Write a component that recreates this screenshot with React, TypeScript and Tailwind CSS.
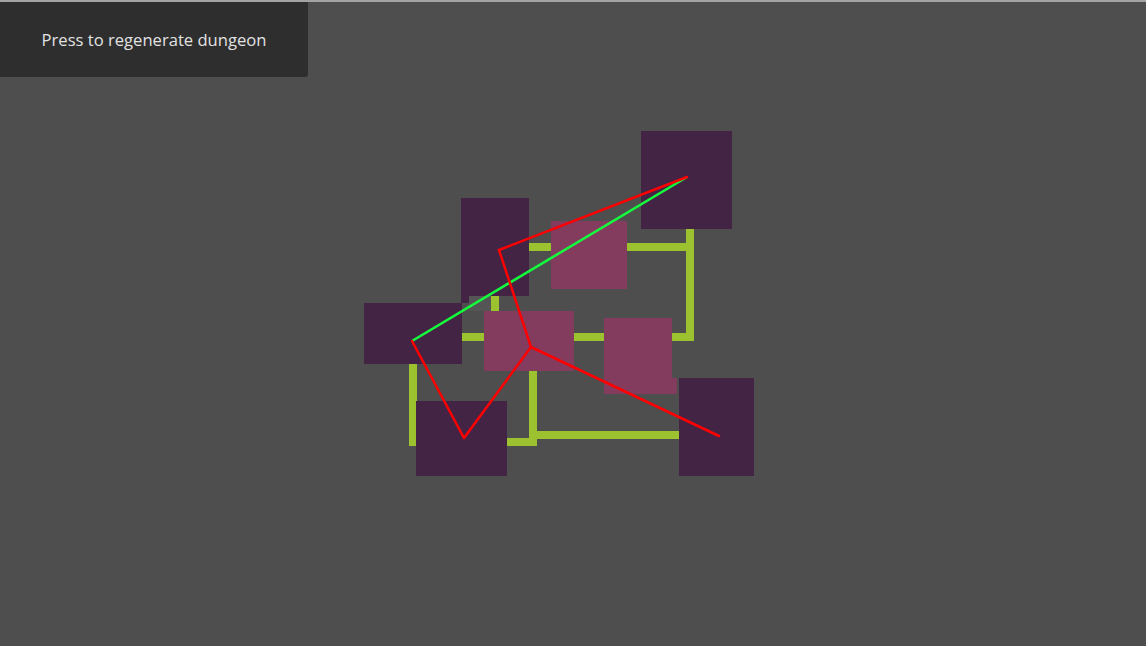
import React from 'react';

type Box = { x: number; y: number; w: number; h: number };

const box = (x1: number, y1: number, x2: number, y2: number): Box => ({ x: x1, y: y1, w: x2 - x1, h: y2 - y1 });

// corridors sit under the rooms
const CORRIDORS: Box[] = [
  box(529, 243, 551, 251),
  box(627, 243, 694, 251),
  box(686, 228, 694, 341),
  box(672, 333, 694, 341),
  box(574, 333, 604, 341),
  box(491, 296, 499, 311),
  box(462, 333, 484, 341),
  box(409, 364, 417, 446),
  box(529, 371, 537, 446),
  box(507, 438, 537, 446),
  box(537, 431, 679, 439),
];

const ROOMS: Box[] = [
  box(641, 131, 732, 229),
  box(461, 198, 529, 296),
  box(461, 296, 469, 303),
  box(364, 303, 462, 364),
  box(416, 401, 507, 476),
  box(679, 378, 754, 476),
];

const HALLS: Box[] = [
  box(551, 221, 627, 289),
  box(484, 311, 574, 371),
  box(604, 318, 672, 394),
  box(672, 378, 677, 394),
];

const RED: [number, number, number, number][] = [
  [412, 341, 464, 438],
  [464, 438, 531, 347],
  [531, 347, 499, 250],
  [499, 250, 687, 177],
  [531, 347, 719, 436],
];

const DungeonMap: React.FC = () => (
  <svg className="absolute inset-0 block" width={1146} height={644} viewBox="0 2 1146 644">
    <rect x={469} y={296} width={30} height={15} fill="#555555" shapeRendering="crispEdges" />
    {CORRIDORS.map((c, i) => (
      <rect key={'c' + i} x={c.x} y={c.y} width={c.w} height={c.h} fill="#9dc22f" shapeRendering="crispEdges" />
    ))}
    {ROOMS.map((r, i) => (
      <rect key={'r' + i} x={r.x} y={r.y} width={r.w} height={r.h} fill="#432445" shapeRendering="crispEdges" />
    ))}
    {HALLS.map((r, i) => (
      <rect key={'h' + i} x={r.x} y={r.y} width={r.w} height={r.h} fill="#833b5e" shapeRendering="crispEdges" />
    ))}
    <line x1={412} y1={341} x2={687} y2={177} stroke="#14ff3c" strokeWidth={2.5} />
    {RED.map(([x1, y1, x2, y2], i) => (
      <line key={'l' + i} x1={x1} y1={y1} x2={x2} y2={y2} stroke="#ff0000" strokeWidth={2.5} strokeLinecap="round" />
    ))}
  </svg>
);

export default function App() {
  return (
    <div className="relative w-[1146px] h-[646px] overflow-hidden bg-[#4e4e4e] border-t-2 border-[#a3a3a3] font-['Open_Sans','Noto_Sans',sans-serif]">
      <DungeonMap />
      <button className="relative z-10 w-[308px] h-[75px] bg-[#2e2e2e] rounded-br-[3px] text-[16.6px] font-medium text-[#e2e2e2] flex items-center justify-center pt-[2px]">
        Press to regenerate dungeon
      </button>
    </div>
  );
}
